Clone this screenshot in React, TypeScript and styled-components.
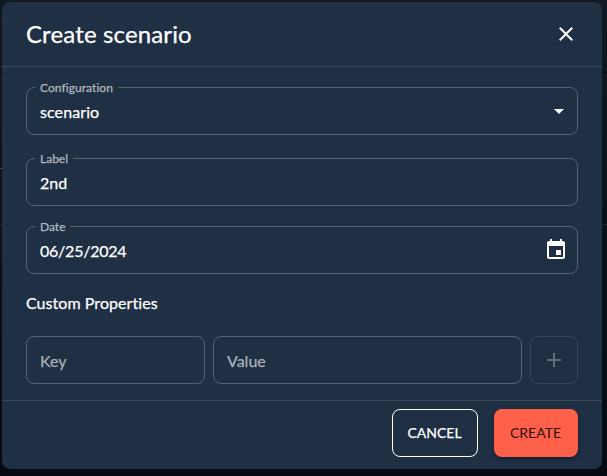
import React from "react";
import styled, { createGlobalStyle } from "styled-components";

const GlobalStyle = createGlobalStyle`
  *, *::before, *::after { box-sizing: border-box; }
  body {
    margin: 0;
    overflow: hidden;
    background: #0a1019;
    color: #fff;
    font-family: Lato, "Open Sans", sans-serif;
    font-size: 16px;
    -webkit-text-stroke: 0.25px;
  }
`;

const Backdrop = styled.div`
  height: 476px;
  padding: 2px 5px 7px 2px;
  background:
    linear-gradient(#05090f, #05090f) 0 72px / 100% 1px no-repeat,
    linear-gradient(#242629, #242629) 0 224px / 100% 1px no-repeat,
    linear-gradient(#4b4d50, #4b4d50) 0 168px / 2px 1px no-repeat,
    linear-gradient(#111923, #0a121b 40%, #050a12);
`;

const Dialog = styled.section`
  display: flex;
  flex-direction: column;
  width: 600px;
  height: 467px;
  border-radius: 8px;
  background: #1f2f44;
`;

const Header = styled.header`
  display: flex;
  align-items: center;
  justify-content: space-between;
  height: 64px;
  padding: 0 24px;
`;

const Title = styled.h2`
  margin: 0;
  font-size: 24px;
  font-weight: 400;
  line-height: 32px;
  letter-spacing: 0.14px;
`;

const CloseButton = styled.button`
  display: flex;
  padding: 0;
  border: 0;
  background: none;
  color: #fff;
`;

const Content = styled.div`
  flex: 1;
  padding: 20px 24px 0;
  border-top: 1px solid #3d4a5a;
  border-bottom: 1px solid #3d4a5a;
`;

const Field = styled.div<{ $gap: number }>`
  position: relative;
  display: flex;
  align-items: center;
  justify-content: space-between;
  height: 48px;
  margin-bottom: ${(p) => p.$gap}px;
  padding: 1px 10px 0 14px;
`;

const Outline = styled.fieldset`
  position: absolute;
  inset: -6px 0 0;
  min-width: 0;
  margin: 0;
  padding: 0 8px;
  border: 1px solid #576271;
  border-radius: 8px;
  pointer-events: none;
`;

const Legend = styled.legend<{ $tracking: number }>`
  height: 13px;
  padding: 0 5px;
  color: #b2b8c0;
  font-size: 12px;
  line-height: 13px;
  letter-spacing: ${(p) => p.$tracking}px;
  white-space: nowrap;
`;

const Value = styled.span<{ $tracking: number }>`
  line-height: 23px;
  letter-spacing: ${(p) => p.$tracking}px;
`;

const PlainBox = styled.div<{ $width: number }>`
  display: flex;
  align-items: center;
  width: ${(p) => p.$width}px;
  height: 48px;
  padding: 1px 13px 0;
  border: 1px solid #576271;
  border-radius: 8px;
  color: #aab0b9;
`;

const SectionTitle = styled.h3`
  margin: 0 0 21px;
  font-size: 16px;
  font-weight: 400;
  line-height: 24px;
  letter-spacing: 0.06px;
`;

const PropertyRow = styled.div`
  display: flex;
  gap: 8px;
`;

const AddButton = styled.button`
  display: flex;
  align-items: center;
  justify-content: center;
  width: 48px;
  height: 48px;
  padding: 0;
  border: 1px solid #394657;
  border-radius: 8px;
  background: none;
  color: #626d7c;
`;

const Footer = styled.footer`
  display: flex;
  justify-content: flex-end;
  gap: 16px;
  height: 68px;
  padding: 8px 24px 12px;
`;

const Action = styled.button<{ $primary?: boolean }>`
  width: ${(p) => (p.$primary ? 84 : 86)}px;
  height: 48px;
  padding: 0 1px 1px 0;
  border: ${(p) => (p.$primary ? "0" : "1px solid #fff")};
  border-radius: 8px;
  background: ${(p) => (p.$primary ? "#ff6049" : "transparent")};
  color: ${(p) => (p.$primary ? "rgba(0, 0, 0, 0.87)" : "#fff")};
  box-shadow: ${(p) =>
    p.$primary ? "0 2px 3px rgba(0, 0, 0, 0.28), 0 1px 5px rgba(0, 0, 0, 0.14)" : "none"};
  font: 400 14px/24px Lato, sans-serif;
  -webkit-text-stroke: ${(p) => (p.$primary ? "0" : "0.25px")};
`;

const Glyph = ({ d }: { d: string }) => (
  <svg width={24} height={24} viewBox="0 0 24 24" fill="currentColor" aria-hidden="true">
    <path d={d} />
  </svg>
);

const icons = {
  close:
    "M19 6.41 17.59 5 12 10.59 6.41 5 5 6.41 10.59 12 5 17.59 6.41 19 12 13.41 17.59 19 19 17.59 13.41 12z",
  down: "M7 10l5 5 5-5z",
  calendar:
    "M17 12h-5v5h5v-5zM16 1v2H8V1H6v2H5c-1.11 0-1.99.9-1.99 2L3 19c0 1.1.89 2 2 2h14c1.1 0 2-.9 2-2V5c0-1.1-.9-2-2-2h-1V1h-2zm3 18H5V8h14v11z",
  add: "M19 13h-6v6h-2v-6H5v-2h6V5h2v6h6z",
};

const IconSlot = styled.span<{ $shift?: number }>`
  display: flex;
  margin: -1px ${(p) => p.$shift ?? 0}px 0 0;
`;

function OutlinedField(props: {
  label: string;
  value: string;
  gap: number;
  labelTracking?: number;
  valueTracking?: number;
  children?: React.ReactNode;
}) {
  return (
    <Field $gap={props.gap}>
      <Outline>
        <Legend $tracking={props.labelTracking ?? 0}>{props.label}</Legend>
      </Outline>
      <Value $tracking={props.valueTracking ?? 0}>{props.value}</Value>
      {props.children}
    </Field>
  );
}

export default function App() {
  return (
    <>
      <GlobalStyle />
      <Backdrop>
        <Dialog role="dialog" aria-label="Create scenario">
          <Header>
            <Title>Create scenario</Title>
            <CloseButton aria-label="Close">
              <Glyph d={icons.close} />
            </CloseButton>
          </Header>
          <Content>
            <OutlinedField
              label="Configuration"
              value="scenario"
              gap={23}
              labelTracking={0.06}
              valueTracking={0.1}
            >
              <IconSlot $shift={-3}>
                <Glyph d={icons.down} />
              </IconSlot>
            </OutlinedField>
            <OutlinedField label="Label" value="2nd" gap={20} />
            <OutlinedField label="Date" value="06/25/2024" gap={17} valueTracking={-0.23}>
              <IconSlot>
                <Glyph d={icons.calendar} />
              </IconSlot>
            </OutlinedField>
            <SectionTitle>Custom Properties</SectionTitle>
            <PropertyRow>
              <PlainBox $width={179}>Key</PlainBox>
              <PlainBox $width={309}>Value</PlainBox>
              <AddButton aria-label="Add property">
                <Glyph d={icons.add} />
              </AddButton>
            </PropertyRow>
          </Content>
          <Footer>
            <Action>CANCEL</Action>
            <Action $primary>CREATE</Action>
          </Footer>
        </Dialog>
      </Backdrop>
    </>
  );
}
